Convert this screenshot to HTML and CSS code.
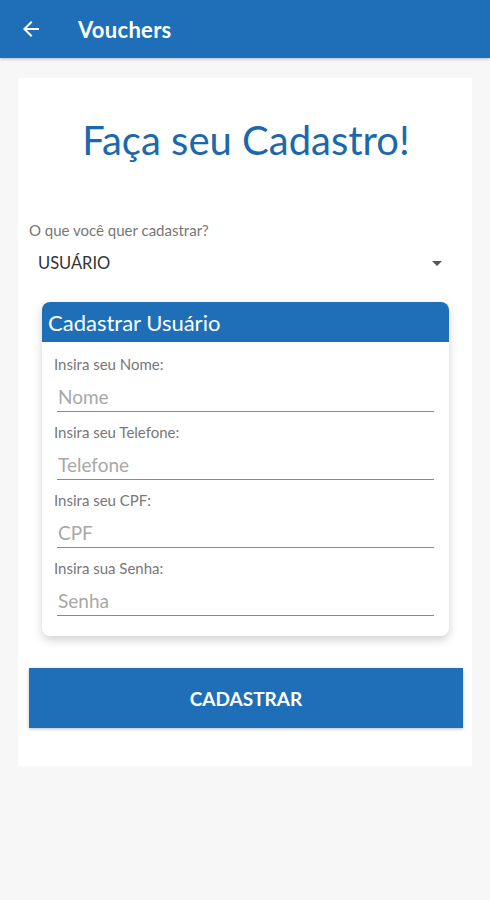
FILE: index.html
```html
<!DOCTYPE html>
<html lang="pt-BR">
<head>
    <meta charset="UTF-8">
    <meta name="viewport" content="width=device-width, initial-scale=1.0">
    <title>Vouchers - Cadastro</title>
    <link rel="stylesheet" href="styles.css">
</head>
<body>
    <div class="app-bar">
        <button class="back-btn" title="Voltar">
            <svg width="24" height="24" viewBox="0 0 24 24"><path d="M20 11H7.83l5.59-5.59L12 4l-8 8 8 8 1.41-1.41L7.83 13H20v-2z" fill="#fff"/></svg>
        </button>
        <div class="app-title">Vouchers</div>
    </div>

    <div class="page">
        <div class="container">
            <h1 class="title">Faça seu Cadastro!</h1>

            <div class="select-label">O que você quer cadastrar?</div>
            <div class="select">
                <span>USUÁRIO</span>
                <span class="caret"></span>
            </div>

            <div class="form-card">
                <div class="form-header">Cadastrar Usuário</div>
                <div class="form-body">
                    <div class="field">
                        <label>Insira seu Nome:</label>
                        <input type="text" placeholder="Nome">
                    </div>
                    <div class="field">
                        <label>Insira seu Telefone:</label>
                        <input type="text" placeholder="Telefone">
                    </div>
                    <div class="field">
                        <label>Insira seu CPF:</label>
                        <input type="text" placeholder="CPF">
                    </div>
                    <div class="field">
                        <label>Insira sua Senha:</label>
                        <input type="password" placeholder="Senha">
                    </div>
                </div>
            </div>

            <button class="btn">CADASTRAR</button>
        </div>
    </div>
</body>
</html>
```

FILE: styles.css
```css
body {
    margin: 0;
    background: #f7f7f7;
    font-family: Lato, "Open Sans", Arial, sans-serif;
    color: #333;
}
.app-bar {
    height: 58px;
    background: #1e6fb8;
    display: flex;
    align-items: center;
    box-shadow: 0 1px 3px rgba(0,0,0,0.25);
}
.back-btn {
    background: none;
    border: none;
    padding: 0;
    margin-left: 19px;
    width: 24px;
    height: 24px;
    cursor: pointer;
}
.app-title {
    color: #fff;
    font-weight: bold;
    font-size: 22px;
    letter-spacing: 0.3px;
    margin-left: 35px;
}
.page {
    padding: 20px 18px;
}
.container {
    background: #fff;
    padding: 30px 9px 38px 11px;
}
.title {
    margin: 7px 0 0 0;
    text-align: center;
    font-weight: normal;
    font-size: 40px;
    color: #1c68ad;
    line-height: 50px;
}
.select-label {
    margin-top: 56px;
    font-size: 15px;
    color: #777;
}
.select {
    display: flex;
    justify-content: space-between;
    align-items: center;
    margin-top: 12px;
    padding: 0 21px 0 9px;
    font-size: 16.5px;
    color: #333;
    height: 24px;
}
.caret {
    width: 0;
    height: 0;
    border-left: 5px solid transparent;
    border-right: 5px solid transparent;
    border-top: 5px solid #555;
}
.form-card {
    margin: 27px 14px 0 13px;
    border-radius: 8px;
    background: #fff;
    box-shadow: 0 4px 10px rgba(0,0,0,0.18);
    overflow: hidden;
}
.form-header {
    background: #1e6fb8;
    color: #fff;
    font-size: 22px;
    height: 40px;
    line-height: 42px;
    padding-left: 6px;
}
.form-body {
    padding: 13px 18px 20px 12px;
}
.field {
    margin-bottom: 11px;
}
.field:last-child {
    margin-bottom: 0;
}
.field label {
    display: block;
    font-size: 15px;
    color: #777;
    height: 18px;
    line-height: 18px;
}
.field input {
    display: block;
    width: 100%;
    box-sizing: border-box;
    margin-left: 3px;
    border: none;
    border-bottom: 1.5px solid #8a8a8a;
    padding: 12px 0 3px 1px;
    font-family: inherit;
    font-size: 19px;
    color: #333;
    background: none;
    outline: none;
}
.field input::placeholder {
    color: #a8a8a8;
}
.btn {
    display: block;
    width: 100%;
    height: 60px;
    margin-top: 32px;
    background: #1e6fb8;
    color: #fff;
    border: none;
    font-family: inherit;
    font-weight: bold;
    font-size: 19px;
    cursor: pointer;
    box-shadow: 0 1px 3px rgba(0,0,0,0.25);
}
```
